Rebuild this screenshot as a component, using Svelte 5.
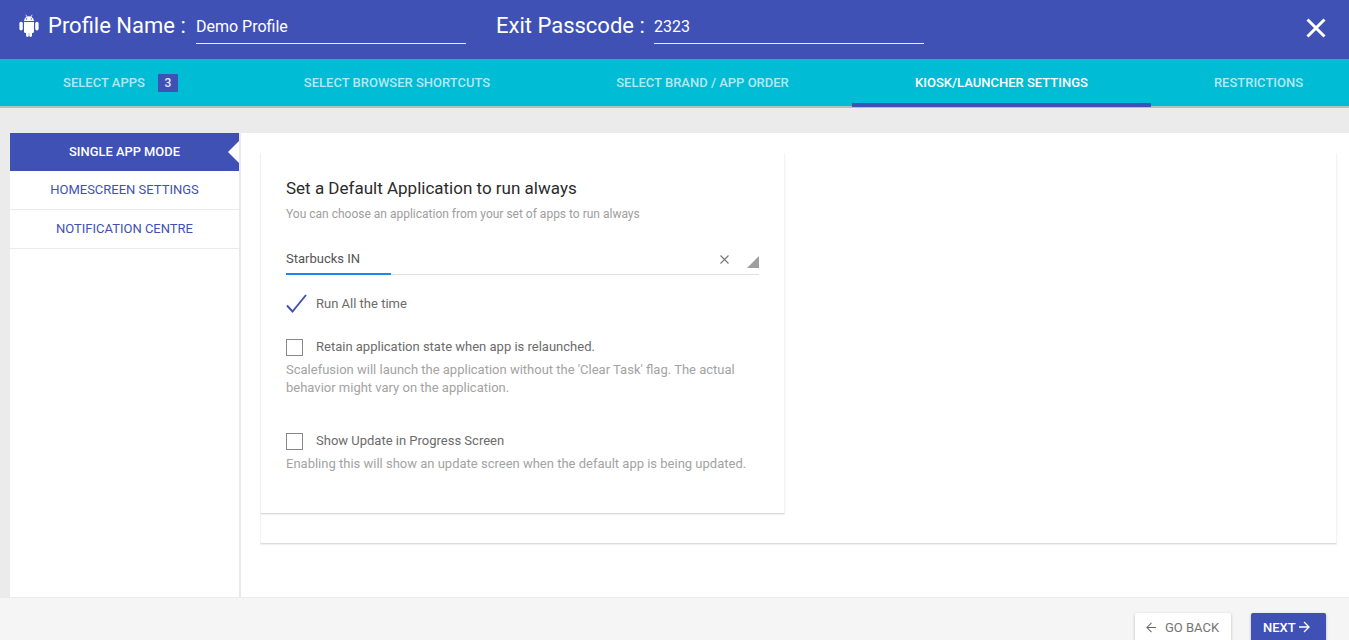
<script>
  const tabs = [
    { label: 'SELECT APPS', w: 241, badge: '3' },
    { label: 'SELECT BROWSER SHORTCUTS', w: 312 },
    { label: 'SELECT BRAND / APP ORDER', w: 299 },
    { label: 'KIOSK/LAUNCHER SETTINGS', w: 299, active: true },
    { label: 'RESTRICTIONS', w: 215 }
  ];
</script>

<div class="page">
  <header class="top">
    <svg class="android" viewBox="0 0 20 23" width="20" height="23" aria-hidden="true">
      <path fill="#fff" d="M5 7a5 5 0 0 1 2.6-4.2L6.5 1l.5-.4 1.2 1.9a5 5 0 0 1 3.6 0L13 .6l.5.4-1.1 1.8A5 5 0 0 1 15 7zM7.6 4.2a.7.7 0 1 0 0 1.4.7.7 0 0 0 0-1.4zm4.8 0a.7.7 0 1 0 0 1.4.7.7 0 0 0 0-1.4z"/>
      <path fill="#fff" d="M5 7.900h10v9.800c0 .7-.5 1.200-1.200 1.200H13v2.600a1.400 1.400 0 0 1-2.800 0v-2.600H9.800v2.600a1.400 1.400 0 0 1-2.800 0v-2.600h-.8c-.7 0-1.200-.5-1.200-1.200z"/>
      <rect fill="#fff" x="0.4" y="7.7" width="3.4" height="8.8" rx="1.7"/>
      <rect fill="#fff" x="16.2" y="7.7" width="3.4" height="8.8" rx="1.7"/>
    </svg>
    <span class="lbl first">Profile Name :</span>
    <span class="field name">Demo Profile</span>
    <span class="lbl second">Exit Passcode :</span>
    <span class="field code">2323</span>
    <svg class="close" viewBox="0 0 20 20" width="20" height="20" aria-hidden="true">
      <path d="M1.5 1.5l17 17M18.5 1.5l-17 17" stroke="#fff" stroke-width="3" fill="none"/>
    </svg>
  </header>

  <nav class="tabs">
    {#each tabs as t}
      <div class="tab" class:active={t.active} style="width:{t.w}px">
        <span>{t.label}</span>
        {#if t.badge}<b class="badge">{t.badge}</b>{/if}
      </div>
    {/each}
  </nav>

  <main class="body">
    <aside class="side">
      <div class="item current">SINGLE APP MODE</div>
      <div class="item">HOMESCREEN SETTINGS</div>
      <div class="item">NOTIFICATION CENTRE</div>
    </aside>
    <section class="content">
      <div class="outer">
        <div class="card">
          <h2>Set a Default Application to run always</h2>
          <p class="sub">You can choose an application from your set of apps to run always</p>
          <div class="select">
            <span class="val">Starbucks IN</span>
            <svg class="x" viewBox="0 0 9 9" width="9" height="9" aria-hidden="true"><path d="M.5.5l8 8M8.5.5l-8 8" stroke="#777" stroke-width="1.1" fill="none"/></svg>
            <i class="corner"></i>
            <i class="focus"></i>
          </div>
          <div class="row run">
            <svg class="tick" viewBox="0 0 21 19" width="21" height="19" aria-hidden="true"><path d="M1 11.5l5.5 6L20 1" stroke="#3f51b5" stroke-width="1.9" fill="none"/></svg>
            <span>Run All the time</span>
          </div>
          <div class="row retain"><i class="box"></i><span>Retain application state when app is relaunched.</span></div>
          <p class="hint h1">Scalefusion will launch the application without the 'Clear Task' flag. The actual behavior might vary on the application.</p>
          <div class="row update"><i class="box"></i><span>Show Update in Progress Screen</span></div>
          <p class="hint h2">Enabling this will show an update screen when the default app is being updated.</p>
        </div>
      </div>
    </section>
  </main>

  <footer class="foot">
    <button class="btn back">
      <svg viewBox="0 0 12 12" width="11" height="11" aria-hidden="true"><path d="M11 6H1.2M6 1L1 6l5 5" stroke="#666" stroke-width="1.1" fill="none"/></svg>
      <span>GO BACK</span>
    </button>
    <button class="btn next">
      <span>NEXT</span>
      <svg viewBox="0 0 12 12" width="12" height="12" aria-hidden="true"><path d="M1 6h9.800M6 1l5 5-5 5" stroke="#fff" stroke-width="1.3" fill="none"/></svg>
    </button>
  </footer>
</div>

<style>
  :global(body) { margin: 0; background: #ebebeb; font-family: Roboto, "Liberation Sans", sans-serif; }
  .page { width: 1349px; height: 640px; display: flex; flex-direction: column; overflow: hidden; }

  .top { height: 59px; background: #3f51b5; display: flex; align-items: flex-start; color: #fff; box-sizing: border-box; flex: none; }
  .android { margin: 14px 0 0 19px; flex: none; }
  .lbl { font-size: 22px; line-height: 26px; margin-top: 13px; white-space: nowrap; }
  .first { margin-left: 9px; width: 148px; }
  .second { margin-left: 30px; width: 158px; }
  .field { font-size: 16px; line-height: 20px; height: 26px; margin-top: 17px; border-bottom: 1px solid #e8eaf6; }
  .name { width: 270px; }
  .code { width: 270px; }
  .close { margin: 18px 0 0 382px; flex: none; }

  .tabs { height: 49px; background: #00bcd4; border-bottom: 2px solid #bdbdbd; box-sizing: border-box; display: flex; flex: none; }
  .tab { position: relative; height: 47px; display: flex; align-items: center; justify-content: center; box-sizing: border-box; padding-bottom: 1px; font-size: 13px; font-weight: 500; color: rgba(255,255,255,.7); white-space: nowrap; flex: none; }
  .tab.active { color: #fff; }
  .tab.active::after { content: ""; position: absolute; left: 0; right: 0; bottom: -1px; height: 4px; background: #3f51b5; }
  .badge { display: inline-block; width: 20px; height: 18px; line-height: 19px; margin: 2px 0 0 13px; text-align: center; background: #3f51b5; border-radius: 1px; font-size: 12px; font-weight: 500; color: #e8eaf6; }

  .body { flex: 1; min-height: 0; margin-top: 25px; display: flex; padding-left: 10px; }
  .side { width: 229px; background: #fff; border-right: 2px solid #e8e8e8; flex: none; }
  .item { height: 38px; line-height: 38px; border-bottom: 1px solid #ebebeb; text-align: center; font-size: 13px; color: #3f51b5; }
  .item.current { position: relative; background: #3f51b5; color: #fff; font-size: 12.9px; font-weight: 500; border-bottom: 0; }
  .item.current::after { content: ""; position: absolute; right: 0; top: 8px; border: 11px solid transparent; border-left: 0; border-right-color: #fff; }

  .content { flex: 1; background: #fff; min-width: 0; padding-left: 19px; padding-top: 20px; }
  .outer { width: 1077px; height: 391px; box-sizing: border-box; border-style: solid; border-color: #f3f3f3; border-width: 0 1px; border-bottom: 1px solid #dcdcdc; box-shadow: 0 1px 1px rgba(0,0,0,.05); }
  .card { width: 524px; height: 361px; box-sizing: border-box; padding: 0 25px; border-right: 1px solid #f3f3f3; border-bottom: 1px solid #dcdcdc; box-shadow: 0 1px 1px rgba(0,0,0,.05); display: flow-root; }

  h2 { margin: 25px 0 0; font-size: 17px; font-weight: 400; line-height: 20px; color: #2b2b2b; }
  .sub { margin: 8px 0 0; font-size: 12px; line-height: 16px; color: #9e9e9e; }
  .select { position: relative; margin-top: 28px; height: 24px; width: 473px; border-bottom: 1px solid #e0e0e0; font-size: 13px; line-height: 18px; color: #555; box-sizing: content-box; }
  .val { display: block; }
  .x { position: absolute; left: 434px; top: 5px; }
  .corner { position: absolute; right: 0; top: 6px; width: 0; height: 0; border-style: solid; border-width: 0 0 12px 12px; border-color: transparent transparent #9e9e9e transparent; }
  .focus { position: absolute; left: 0; bottom: -1px; width: 105px; height: 2px; background: #1e88e5; }

  .row { display: flex; align-items: center; font-size: 13px; color: #6b6b6b; line-height: 18px; }
  .run { margin-top: 19px; height: 19px; }
  .tick { flex: none; margin-right: 9px; }
  .retain { margin-top: 25px; height: 18px; }
  .box { display: block; width: 15px; height: 15px; border: 1px solid #888; flex: none; margin-right: 13px; }
  .hint { margin: 0; font-size: 13px; line-height: 18px; color: #a3a3a3; }
  .h1 { margin-top: 5px; width: 474px; }
  .update { margin-top: 35px; height: 18px; }
  .h2 { margin-top: 5px; white-space: nowrap; }

  .foot { height: 43px; flex: none; background: #f5f5f5; border-top: 1px solid #ebebeb; box-sizing: border-box; display: flex; align-items: flex-start; padding: 15px 0 0 1135px; }
  .btn { height: 32px; border: 0; padding: 0; border-radius: 2px; display: flex; align-items: center; font: 400 13px Roboto, sans-serif; box-shadow: 0 1px 3px rgba(0,0,0,.25); flex: none; }
  .back { width: 96px; background: #fff; color: #757575; padding-left: 11px; gap: 8px; padding-bottom: 4px; }
  .next { width: 75px; margin-left: 20px; background: #3f51b5; color: #fff; font-weight: 500; padding-left: 12px; gap: 2px; padding-bottom: 4px; }
</style>
